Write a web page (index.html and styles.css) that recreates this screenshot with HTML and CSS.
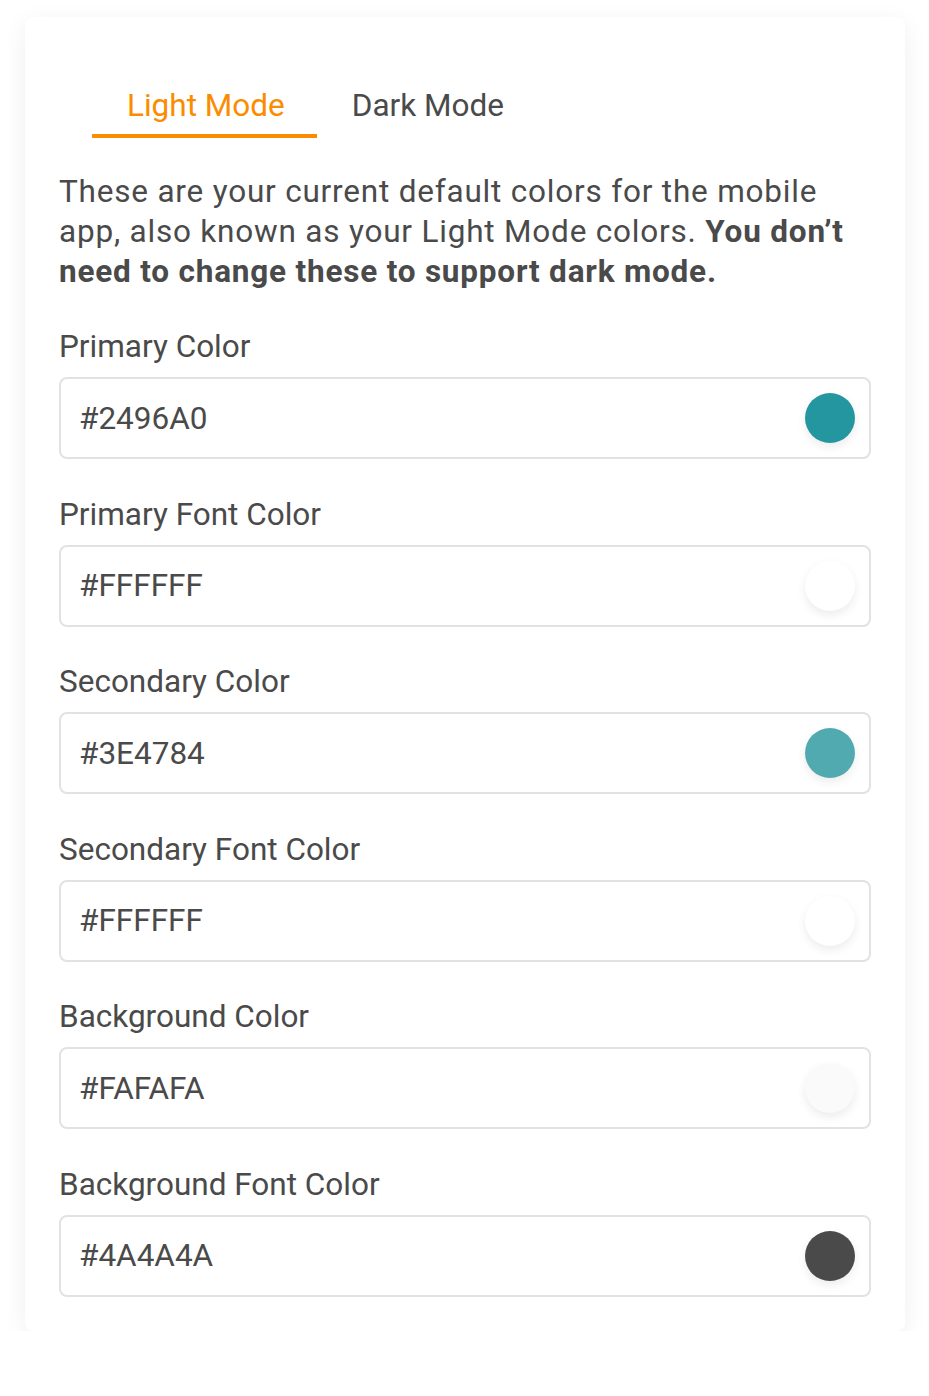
FILE: index.html
```html
<!DOCTYPE html>
<html lang="en">
<head>
<meta charset="utf-8">
<title>Colors</title>
<link rel="stylesheet" href="styles.css">
</head>
<body>
<div class="card">
  <div class="tabs">
    <div class="tab active">Light Mode</div>
    <div class="tab">Dark Mode</div>
  </div>
  <p class="intro">These are your current default colors for the mobile app, also known as your Light Mode colors. <strong>You don’t need to change these to support dark mode.</strong></p>
  <div class="fields">
    <div class="field">
      <div class="label">Primary Color</div>
      <div class="input"><span class="value">#2496A0</span><span class="swatch sw-primary"></span></div>
    </div>
    <div class="field">
      <div class="label">Primary Font Color</div>
      <div class="input"><span class="value">#FFFFFF</span><span class="swatch sw-white"></span></div>
    </div>
    <div class="field">
      <div class="label">Secondary Color</div>
      <div class="input"><span class="value">#3E4784</span><span class="swatch sw-secondary"></span></div>
    </div>
    <div class="field">
      <div class="label">Secondary Font Color</div>
      <div class="input"><span class="value">#FFFFFF</span><span class="swatch sw-white"></span></div>
    </div>
    <div class="field">
      <div class="label">Background Color</div>
      <div class="input"><span class="value">#FAFAFA</span><span class="swatch sw-bg"></span></div>
    </div>
    <div class="field">
      <div class="label">Background Font Color</div>
      <div class="input"><span class="value">#4A4A4A</span><span class="swatch sw-dark"></span></div>
    </div>
  </div>
</div>
</body>
</html>
```
FILE: styles.css
```css
* { box-sizing: border-box; }
html, body { margin: 0; padding: 0; background: #ffffff; }
body {
  font-family: Roboto, "Liberation Sans", sans-serif;
  color: #4a4a4a;
  padding: 17px 24px 0 25px;
}
.card {
  width: 880px;
  background: #fff;
  border-radius: 8px;
  box-shadow: 0 6px 24px rgba(0,0,0,0.065);
  padding: 69px 34px 34px 34px;
}
.tabs {
  display: flex;
  margin-left: 33px;
}
.tab {
  padding: 0 32px 8px 35px;
  font-size: 31.5px;
  line-height: 40px;
  border-bottom: 4px solid transparent;
}
.tab.active {
  color: #fb8c00;
  border-bottom-color: #fb8c00;
}
.intro {
  margin: 34px 0 35px 0;
  font-size: 31.5px;
  line-height: 40px;
  letter-spacing: 0.8px;
}
.intro strong { font-weight: 700; }
.fields {
  display: flex;
  flex-direction: column;
  gap: 35.6px;
}
.label {
  font-size: 31.5px;
  line-height: 40px;
  margin-bottom: 10px;
}
.input {
  height: 82px;
  border: 2px solid #e2e2e2;
  border-radius: 8px;
  display: flex;
  align-items: center;
  justify-content: space-between;
  padding: 0 14px 0 18px;
}
.value { font-size: 31.5px; }
.swatch {
  width: 50px;
  height: 50px;
  border-radius: 50%;
  box-shadow: 0 4px 10px rgba(0,0,0,0.08);
}
.sw-primary { background: #24969f; }
.sw-white { background: #ffffff; }
.sw-secondary { background: #52aab1; }
.sw-bg { background: #fafafa; }
.sw-dark { background: #4a4a4a; }
```
